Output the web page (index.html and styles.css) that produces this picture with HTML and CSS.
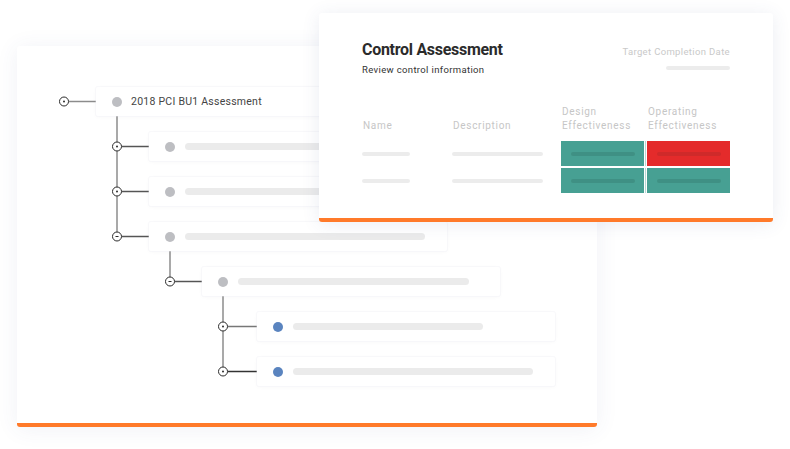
FILE: index.html
```
<!DOCTYPE html>
<html>
<head>
<meta charset="utf-8">
<link rel="stylesheet" href="styles.css">
</head>
<body>
<div class="stage">
  <section class="tree-card">
    <svg class="connectors" width="580" height="381" viewBox="0 0 580 381">
      <g stroke="#8c8c8c" stroke-width="1.5" fill="none">
        <line x1="51.5" y1="55.5" x2="79" y2="55.5"/>
        <line x1="100" y1="69" x2="100" y2="186"/>
        <line x1="104.5" y1="100.5" x2="132" y2="100.5" stroke="#555"/>
        <line x1="104.5" y1="145.5" x2="132" y2="145.5" stroke="#555"/>
        <line x1="104.5" y1="190.5" x2="132" y2="190.5" stroke="#555"/>
        <line x1="153" y1="205" x2="153" y2="231"/>
        <line x1="157.5" y1="235.5" x2="185" y2="235.5" stroke="#555"/>
        <line x1="206" y1="250" x2="206" y2="321"/>
        <line x1="210.5" y1="280.5" x2="240" y2="280.5" stroke="#777"/>
        <line x1="210.5" y1="325.5" x2="240" y2="325.5" stroke="#333"/>
      </g>
      <g stroke="#2b2b2b" stroke-width="1" fill="#fff">
        <circle cx="47" cy="55.5" r="4.5"/>
        <circle cx="100" cy="100.5" r="4.5"/>
        <circle cx="100" cy="145.5" r="4.5"/>
        <circle cx="100" cy="190.5" r="4.5"/>
        <circle cx="153" cy="235.5" r="4.5"/>
        <circle cx="206" cy="280.5" r="4.5"/>
        <circle cx="206" cy="325.5" r="4.5"/>
      </g>
      <g fill="#2b2b2b">
        <circle cx="47" cy="55.5" r="1"/>
        <circle cx="100" cy="100.5" r="1"/>
        <circle cx="100" cy="145.5" r="1"/>
        <rect x="98.5" y="190" width="3" height="1"/>
        <rect x="151.5" y="235" width="3" height="1"/>
        <circle cx="206" cy="280.5" r="1"/>
        <circle cx="206" cy="325.5" r="1"/>
      </g>
    </svg>
    <div class="rows">
      <div class="row lvl0"><span class="dot"></span><span class="label">2018 PCI BU1 Assessment</span></div>
      <div class="row lvl1"><span class="dot"></span><span class="bar w240"></span></div>
      <div class="row lvl1"><span class="dot"></span><span class="bar w240"></span></div>
      <div class="row lvl1"><span class="dot"></span><span class="bar w240"></span></div>
      <div class="row lvl2"><span class="dot"></span><span class="bar w231"></span></div>
      <div class="row lvl3"><span class="dot blue"></span><span class="bar w190"></span></div>
      <div class="row lvl3"><span class="dot blue"></span><span class="bar w240"></span></div>
    </div>
  </section>

  <section class="control-card">
    <header class="control-head">
      <div class="titles">
        <h1 class="title">Control Assessment</h1>
        <p class="subtitle">Review control information</p>
      </div>
      <div class="target">
        <span class="target-label">Target Completion Date</span>
        <span class="ph date-bar"></span>
      </div>
    </header>
    <div class="table">
      <div class="th">Name</div>
      <div class="th">Description</div>
      <div class="th">Design<br>Effectiveness</div>
      <div class="th">Operating<br>Effectiveness</div>

      <div class="td"><span class="ph w48"></span></div>
      <div class="td"><span class="ph w91"></span></div>
      <div class="td cell teal design"><span class="inner"></span></div>
      <div class="td cell red"><span class="inner"></span></div>

      <div class="td"><span class="ph w48"></span></div>
      <div class="td"><span class="ph w91"></span></div>
      <div class="td cell teal design"><span class="inner"></span></div>
      <div class="td cell teal"><span class="inner"></span></div>
    </div>
  </section>
</div>
</body>
</html>
```
FILE: styles.css
```
* { box-sizing: border-box; }
html, body { margin: 0; padding: 0; background: #fff; }
body {
  font-family: Roboto, "Liberation Sans", sans-serif;
  width: 790px;
  height: 449px;
  overflow: hidden;
}
.stage {
  position: relative;
  width: 790px;
  height: 449px;
  padding: 46px 0 0 17px;
}

/* back card */
.tree-card {
  position: relative;
  width: 580px;
  height: 381px;
  background: #fff;
  border-bottom: 4px solid #ff7a2a;
  border-radius: 3px;
  box-shadow: 0 2px 22px rgba(60, 80, 140, 0.08);
}
.connectors {
  position: absolute;
  left: 0;
  top: 0;
}
.rows {
  display: flex;
  flex-direction: column;
  gap: 16px;
  padding-top: 41px;
}
.row {
  position: relative;
  width: 298px;
  height: 29px;
  background: #fff;
  display: flex;
  align-items: center;
  padding-left: 16px;
  border-radius: 2px;
  box-shadow: 0 0 0 1px rgba(238, 240, 246, 0.3), 0 1px 4px rgba(20, 30, 60, 0.03);
}
.lvl0 { margin-left: 79px; }
.lvl1 { margin-left: 132px; }
.lvl2 { margin-left: 185px; }
.lvl3 { margin-left: 240px; }
.dot {
  width: 10px;
  height: 10px;
  border-radius: 50%;
  background: #bdbec2;
  flex: none;
}
.dot.blue { background: #5a84bf; }
.label {
  margin-left: 9px;
  font-size: 10.5px;
  color: #444;
  letter-spacing: 0.25px;
}
.bar {
  margin-left: 10px;
  height: 7px;
  border-radius: 3.5px;
  background: #ebebeb;
}
.w240 { width: 240px; }
.w231 { width: 231px; }
.w190 { width: 190px; }

/* front card */
.control-card {
  position: absolute;
  left: 319px;
  top: 13px;
  width: 454px;
  height: 209px;
  background: #fff;
  border-bottom: 4px solid #ff7a2a;
  border-radius: 3px;
  box-shadow: 0 2px 18px rgba(60, 80, 140, 0.1);
  padding: 26px 43px 0 43px;
}
.control-head {
  display: flex;
  justify-content: space-between;
  align-items: flex-start;
}
.title {
  margin: 0;
  font-family: Roboto, "Liberation Sans", sans-serif;
  font-weight: 700;
  font-size: 17px;
  line-height: 20px;
  color: #2b2b2b;
  letter-spacing: -0.3px;
  transform: scaleX(0.94);
  transform-origin: left center;
  white-space: nowrap;
}
.subtitle {
  margin: 5px 0 0 0;
  font-size: 9.5px;
  line-height: 12px;
  color: #333;
  letter-spacing: 0.35px;
}
.target {
  display: flex;
  flex-direction: column;
  align-items: flex-end;
  padding-top: 7px;
}
.target-label {
  font-size: 9.5px;
  line-height: 12px;
  color: #c9c9c9;
  letter-spacing: 0.35px;
}
.ph {
  display: block;
  height: 4px;
  border-radius: 2px;
  background: #ececec;
}
.date-bar {
  width: 64px;
  margin-top: 8px;
}
.w48 { width: 48px; }
.w91 { width: 91px; }

.table {
  margin-top: 29px;
  display: grid;
  grid-template-columns: 90px 109px 86px 83px;
  grid-template-rows: 34px 25px 25px;
  row-gap: 2px;
}
.th {
  font-size: 10px;
  line-height: 14px;
  color: #c6c6c6;
  letter-spacing: 0.7px;
  align-self: start;
  padding-left: 1px;
  white-space: nowrap;
}
.th:nth-child(1), .th:nth-child(2) { padding-top: 14px; }
.td {
  display: flex;
  align-items: center;
}
.cell {
  position: relative;
  padding-left: 10px;
}
.cell.design { margin-right: 3px; }
.cell.design::after {
  content: "";
  position: absolute;
  right: -2px;
  top: 0;
  bottom: 0;
  width: 1px;
  background: #b7d9d3;
}
.teal { background: #47a093; }
.red { background: #e42b2b; }
.inner {
  width: 64px;
  height: 4px;
  border-radius: 2px;
}
.teal .inner { background: #3f9084; }
.red .inner { background: #cf2a2a; }
```
